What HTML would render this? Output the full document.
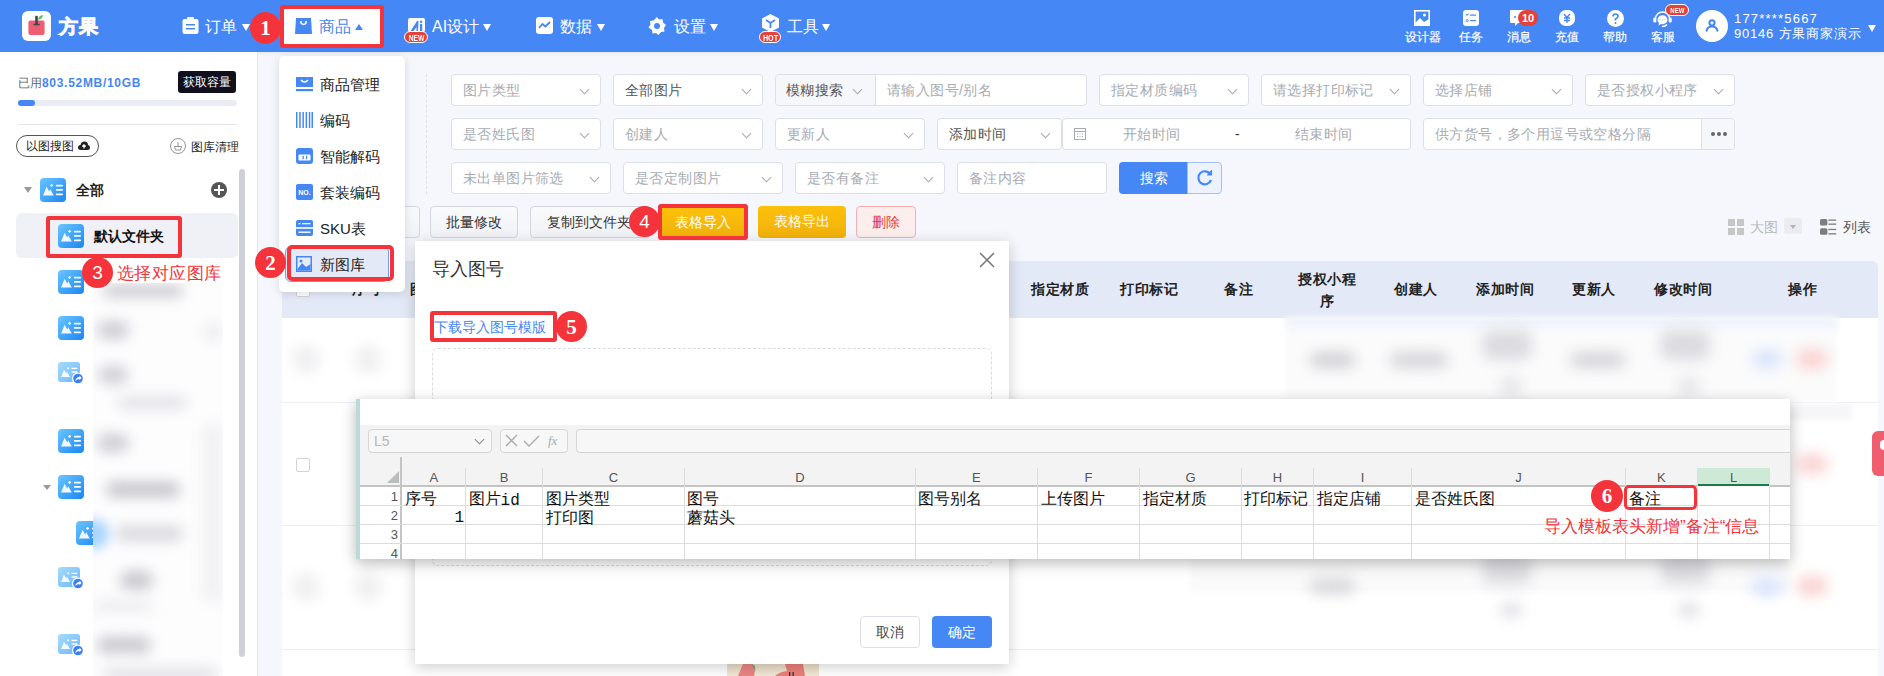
<!DOCTYPE html>
<html><head><meta charset="utf-8">
<style>
*{box-sizing:border-box;margin:0;padding:0}
html,body{width:1884px;height:676px;overflow:hidden;background:#f5f7fc;font-family:"Liberation Sans",sans-serif;color:#333;position:relative}
.a{position:absolute}
.nav{left:0;top:0;width:1884px;height:52px;background:#4587f4;box-shadow:0 1px 4px rgba(0,0,0,.08);z-index:0}
.wt{color:#fff}
.navi{font-size:16px;color:#fff;line-height:16px;white-space:nowrap}
.car{width:0;height:0;border-left:4.5px solid transparent;border-right:4.5px solid transparent;border-top:7px solid #fff}
.rit{font-size:12px;color:#fff;line-height:12px;white-space:nowrap;margin-top:1px;-webkit-text-stroke:0.2px #fff}
.badge{background:#e5413a;color:#fff;font-weight:bold;border-radius:10px;text-align:center}
.side{left:0;top:52px;width:258px;height:624px;background:#fff;border-right:1px solid #e6e8ee}
.sel{background:#fff;border:1px solid #dcdfe6;border-radius:4px;height:32px;font-size:14px;color:#a8abb2;line-height:31px;letter-spacing:0.4px;padding-left:11px;white-space:nowrap}
.chev{position:absolute;right:12px;top:10.5px;width:7px;height:7px;border-right:1px solid #a8abb2;border-bottom:1px solid #a8abb2;transform:rotate(45deg)}
.btn{border:1px solid #d4d6dc;border-radius:4px;background:linear-gradient(#f9fafc,#f1f2f6);height:32px;font-size:14px;line-height:30px;text-align:center;color:#333;white-space:nowrap}
.circ{width:31px;height:31px;border-radius:50%;background:#f5333a;color:#fff;text-align:center;font-size:18px;line-height:31px}
.rbox{border:4px solid #f5333a;border-radius:3px}
.th{font-size:14px;font-weight:bold;color:#222;white-space:nowrap;line-height:16px;letter-spacing:0.6px}
.ico{width:26px;height:24px;border-radius:4px;background:linear-gradient(135deg,#52b4fb,#2d8cf0)}
.ico::before{content:"";position:absolute;left:4px;top:9px;width:0;height:0;border-left:5px solid transparent;border-right:5px solid transparent;border-bottom:10px solid #fff}
.ico::after{content:"";position:absolute;left:16px;top:6px;width:6px;height:2px;background:#fff;box-shadow:0 5px 0 #fff,0 10px 0 #fff}
.sh{opacity:.6}
.blr{filter:blur(6px);border-radius:8px}
.blt{filter:blur(7px);border-radius:10px}
.xh{font-size:13px;line-height:14px;margin-top:1px;color:#555;text-align:center}
.xr{font-size:13px;line-height:14px;color:#555;text-align:right}
.xc{font-family:"Liberation Mono",monospace;font-size:16px;line-height:19px;color:#111;font-weight:300;margin-top:1px;white-space:nowrap}
.cs{font-family:"Liberation Serif",serif;font-size:21px;line-height:32px;font-weight:bold}
.k{display:inline-block;min-width:1em;text-align:center}
.xc .k{font-family:"Liberation Sans",sans-serif;position:relative;top:-1.5px}
</style></head><body>

<svg width="0" height="0" style="position:absolute"><defs>
<linearGradient id="g1" x1="0" y1="0" x2="1" y2="1"><stop offset="0" stop-color="#6ac6ff"/><stop offset="1" stop-color="#1b86f4"/></linearGradient>
<linearGradient id="g2" x1="0" y1="0" x2="1" y2="1"><stop offset="0" stop-color="#a6dcfd"/><stop offset="1" stop-color="#6db7f7"/></linearGradient>
<symbol id="fi" viewBox="0 0 26 24"><rect x="0" y="0" width="26" height="24" rx="4" fill="url(#g1)"/><path d="M3 17.6 L6.6 8.8 L9.2 13.5 L10.2 11.2 L13.8 17.6z" fill="#f2f8ff"/><path d="M11.6 6 V8.8 M10.2 7.4 H13" stroke="#fff" stroke-width="1.2"/><rect x="15.9" y="6.8" width="7.1" height="1.7" rx=".8" fill="#fff"/><rect x="15.9" y="11.1" width="7.1" height="1.7" rx=".8" fill="#fff"/><rect x="15.9" y="15.6" width="7.1" height="1.7" rx=".8" fill="#fff"/></symbol>
<symbol id="fs" viewBox="0 0 26 24"><rect x="0" y="0" width="22" height="20" rx="3" fill="url(#g2)"/><path d="M3 15 L6 7.5 L8.2 11.5 L9 9.5 L12 15z" fill="#f5faff"/><circle cx="10.2" cy="6.3" r="1" fill="#fff"/><rect x="13.5" y="5.7" width="5.8" height="1.4" fill="#fff"/><rect x="13.5" y="9.3" width="5.8" height="1.4" fill="#fff"/><circle cx="20" cy="16.5" r="6" fill="#fff"/><circle cx="20" cy="16.5" r="4.8" fill="#3b7ff0"/><path d="M17.3 19 Q17.8 15.3 21.5 15 V13.6 L23.6 16 L21.5 18.3 V16.9 Q19 16.9 17.3 19z" fill="#fff"/></symbol>
</defs></svg>
<!-- NAV -->
<div class="a nav"></div>
<div class="a" style="left:22px;top:11px;width:29px;height:30px;background:#fff;border-radius:6px"></div>
<svg class="a" style="left:22px;top:11px" width="29" height="30" viewBox="0 0 29 30"><rect x="6.4" y="9.5" width="16.2" height="14.5" rx="2" fill="#ef5e70"/><rect x="13.2" y="4.8" width="2.6" height="9.5" rx="1" fill="#3d434f"/><rect x="11.4" y="12.7" width="6.5" height="1.6" rx=".8" fill="#3d434f"/><path d="M16 8.8 Q16.5 4.5 21 4 Q20.5 8.3 16 8.8z" fill="#5fbf55"/></svg>
<div class="a wt" style="left:59px;top:16px;font-size:19px;font-weight:bold;line-height:22px;-webkit-text-stroke:0.9px #fff;letter-spacing:0.5px"><span class="k">方</span><span class="k">果</span></div>
<svg class="a" style="left:182px;top:17px" width="17" height="17" viewBox="0 0 17 17"><rect x="0.5" y="2" width="16" height="15" rx="2" fill="#fff"/><rect x="5" y="0" width="7" height="4" rx="1" fill="#fff"/><rect x="4" y="7" width="9" height="1.5" fill="#4587f4"/><rect x="4" y="11" width="9" height="1.5" fill="#4587f4"/></svg>
<div class="a navi" style="left:205px;top:19px"><span class="k">订</span><span class="k">单</span></div>
<div class="a car" style="left:242px;top:24px"></div>

<div class="a" style="left:284px;top:9px;width:96px;height:35px;background:#fff"></div>
<svg class="a" style="left:295px;top:18px" width="17" height="16" viewBox="0 0 17 16"><path d="M1 0 H16 L17 16 H0z" fill="#4587f4"/><path d="M6 3 V5 Q8.5 8 11 5 V3" stroke="#fff" stroke-width="1.6" fill="none"/></svg>
<div class="a navi" style="left:319px;top:19px;color:#4587f4"><span class="k">商</span><span class="k">品</span></div>
<div class="a car" style="left:355px;top:24px;border-top:0;border-bottom:6px solid #4587f4"></div>

<svg class="a" style="left:408px;top:18px" width="17" height="14" viewBox="0 0 17 14"><rect x="0" y="0" width="17" height="14" rx="2" fill="#fff"/><path d="M2 14 L9 3 L10.5 3 L10 14 H8.5 L8.6 9 L5 14z" fill="#4587f4"/><rect x="12" y="6" width="2.2" height="8" fill="#4587f4"/><circle cx="13.1" cy="3.8" r="1.2" fill="#4587f4"/></svg>
<div class="a badge" style="left:404px;top:31px;width:24px;height:12px;font-size:9px;line-height:12px;border:1px solid #fff"><span style="display:inline-block;transform:scaleX(.75);font-weight:bold">NEW</span></div>
<div class="a navi" style="left:432px;top:19px">AI<span class="k">设</span><span class="k">计</span></div>
<div class="a car" style="left:483px;top:24px"></div>

<svg class="a" style="left:536px;top:17px" width="17" height="17" viewBox="0 0 17 17"><rect width="17" height="17" rx="3" fill="#fff"/><path d="M3 11 L6.5 7 L9.5 9.5 L14 5" stroke="#4587f4" stroke-width="1.8" fill="none"/></svg>
<div class="a navi" style="left:560px;top:19px"><span class="k">数</span><span class="k">据</span></div>
<div class="a car" style="left:597px;top:24px"></div>

<svg class="a" style="left:648px;top:17px" width="18" height="18" viewBox="0 0 18 18"><path d="M9 0 L11 2.5 L14.5 2 L15 5.5 L18 8 L16 11 L16.5 14.5 L13 15 L10.5 18 L8 16 L4.5 16.5 L4 13 L0.5 10.5 L2.5 7.5 L2 4 L5.5 3.5z" fill="#fff"/><circle cx="9" cy="9" r="3" fill="#4587f4"/></svg>
<div class="a navi" style="left:674px;top:19px"><span class="k">设</span><span class="k">置</span></div>
<div class="a car" style="left:710px;top:24px"></div>

<svg class="a" style="left:762px;top:14px" width="17" height="18" viewBox="0 0 17 18"><path d="M8.5 0 L17 4.5 V13.5 L8.5 18 L0 13.5 V4.5z" fill="#fff"/><path d="M4 6 L8.5 9 L13 6 M8.5 9 V14" stroke="#4587f4" stroke-width="1.8" fill="none"/></svg>
<div class="a badge" style="left:759px;top:31px;width:22px;height:12px;font-size:9px;line-height:12px;border:1px solid #fff"><span style="display:inline-block;transform:scaleX(.8);font-weight:bold">HOT</span></div>
<div class="a navi" style="left:787px;top:19px"><span class="k">工</span><span class="k">具</span></div>
<div class="a car" style="left:822px;top:24px"></div>

<!-- right icons -->
<svg class="a" style="left:1414px;top:10px" width="16" height="16" viewBox="0 0 16 16"><rect x="0.8" y="0.8" width="14.4" height="14.4" fill="none" stroke="#fff" stroke-width="1.6"/><path d="M1 13 L6 8 L10 12 L15 9 V15 H1z" fill="#fff"/><circle cx="10.5" cy="5" r="1.6" fill="#fff"/></svg>
<div class="a rit" style="left:1405px;top:30px"><span class="k">设</span><span class="k">计</span><span class="k">器</span></div>
<svg class="a" style="left:1463px;top:10px" width="16" height="16" viewBox="0 0 16 16"><rect width="16" height="16" rx="3" fill="#fff"/><rect x="7" y="4.5" width="6" height="1.2" fill="#4587f4"/><rect x="7" y="10" width="6" height="1.2" fill="#4587f4"/><path d="M3 4 L4 5.5 L5.5 3.5" stroke="#4587f4" stroke-width="1" fill="none"/><circle cx="4.2" cy="10.6" r="1.1" fill="none" stroke="#4587f4" stroke-width="0.9"/></svg>
<div class="a rit" style="left:1459px;top:30px"><span class="k">任</span><span class="k">务</span></div>
<svg class="a" style="left:1510px;top:10px" width="18" height="17" viewBox="0 0 18 17"><path d="M1 0 H17 A1 1 0 0 1 18 1 V13 H8 L5 16 V13 H1 A1 1 0 0 1 0 12 V1 A1 1 0 0 1 1 0z" fill="#fff"/><circle cx="5" cy="7" r="1" fill="#4587f4"/></svg>
<div class="a badge" style="left:1518px;top:10px;width:20px;height:16px;font-size:11px;line-height:16px;font-weight:bold">10</div>
<div class="a rit" style="left:1507px;top:30px"><span class="k">消</span><span class="k">息</span></div>
<svg class="a" style="left:1559px;top:10px" width="16" height="16" viewBox="0 0 16 16"><rect width="16" height="16" rx="7" fill="#fff"/><path d="M5 4 L8 7.5 L11 4 M8 7.5 V13 M5 8 H11 M5 10.5 H11" stroke="#4587f4" stroke-width="1.3" fill="none"/></svg>
<div class="a rit" style="left:1555px;top:30px"><span class="k">充</span><span class="k">值</span></div>
<svg class="a" style="left:1607px;top:10px" width="17" height="17" viewBox="0 0 17 17"><circle cx="8.5" cy="8.5" r="8.5" fill="#fff"/><path d="M6 6.5 Q6 4 8.5 4 Q11 4 11 6.3 Q11 8 8.5 9 V10.5" stroke="#4587f4" stroke-width="1.7" fill="none"/><circle cx="8.5" cy="13" r="1" fill="#4587f4"/></svg>
<div class="a rit" style="left:1603px;top:30px"><span class="k">帮</span><span class="k">助</span></div>
<svg class="a" style="left:1653px;top:9px" width="19" height="18" viewBox="0 0 19 18"><path d="M2.5 10 A7 7 0 0 1 16.5 10" stroke="#fff" stroke-width="1.6" fill="none"/><rect x="0.3" y="8.5" width="3" height="5" rx="1.2" fill="#fff"/><rect x="15.7" y="8.5" width="3" height="5" rx="1.2" fill="#fff"/><path d="M4.5 10.5 A5 4.5 0 1 1 8 15 L5.5 16.5 L6 14 A5 4.5 0 0 1 4.5 10.5z" fill="#fff"/><circle cx="7" cy="10.5" r=".7" fill="#b9cff8"/><circle cx="9.5" cy="10.5" r=".7" fill="#b9cff8"/><circle cx="12" cy="10.5" r=".7" fill="#b9cff8"/><path d="M14 15.5 Q12 17.8 9 17.5" stroke="#fff" stroke-width="1.5" fill="none"/></svg>
<div class="a badge" style="left:1665px;top:4px;width:24px;height:12px;font-size:8px;line-height:12px;border:1px solid #fff"><span style="display:inline-block;transform:scaleX(.75);font-weight:bold">NEW</span></div>
<div class="a rit" style="left:1651px;top:30px"><span class="k">客</span><span class="k">服</span></div>
<div class="a" style="left:1696px;top:10px;width:32px;height:32px;border-radius:50%;background:#fff"></div>
<svg class="a" style="left:1703px;top:17px" width="18" height="18" viewBox="0 0 18 18"><circle cx="9" cy="5.8" r="2.6" stroke="#4587f4" stroke-width="2" fill="none"/><path d="M3.6 13.8 Q4.5 9.6 9 9.6 Q13.5 9.6 14.4 13.8" stroke="#4587f4" stroke-width="2" fill="none" stroke-linecap="round"/></svg>
<div class="a wt" style="left:1734px;top:12px;font-size:13px;line-height:13px;letter-spacing:1.2px">177****5667</div>
<div class="a wt" style="left:1734px;top:27px;font-size:13px;line-height:13px;letter-spacing:0.8px">90146 <span class="k">方</span><span class="k">果</span><span class="k">商</span><span class="k">家</span><span class="k">演</span><span class="k">示</span></div>
<div class="a car" style="left:1868px;top:25px"></div>

<!-- SIDEBAR -->
<div class="a side"></div>


<!-- SIDEBAR content -->
<div class="a" style="left:18px;top:76px;font-size:12px;line-height:14px;color:#666;white-space:nowrap"><span class="k">已</span><span class="k">用</span><b style="color:#4587f4;letter-spacing:0.7px">803.52MB/10GB</b></div>
<div class="a" style="left:178px;top:71px;width:58px;height:22px;background:#0f0f1e;border-radius:3px;color:#fff;font-size:12px;line-height:22px;text-align:center"><span class="k">获</span><span class="k">取</span><span class="k">容</span><span class="k">量</span></div>
<div class="a" style="left:18px;top:100px;width:219px;height:6px;background:#e9ecf3;border-radius:3px"></div>
<div class="a" style="left:18px;top:100px;width:17px;height:6px;background:#4587f4;border-radius:3px"></div>
<div class="a" style="left:18px;top:124px;width:219px;height:1px;background:#e3e5ea"></div>
<div class="a" style="left:16px;top:135px;width:83px;height:22px;border:1px solid #555;border-radius:11px;font-size:12px;line-height:20px;padding-left:9px;color:#222;white-space:nowrap"><span class="k">以</span><span class="k">图</span><span class="k">搜</span><span class="k">图</span></div>
<svg class="a" style="left:78px;top:141px" width="12" height="10" viewBox="0 0 12 10"><path d="M3 9 Q0 9 0 6.5 Q0 4 2.5 4 Q3 0.5 6.5 0.5 Q10 0.5 10 4 Q12 4.3 12 6.5 Q12 9 9.5 9z" fill="#222"/><path d="M6 7.5 V4 M4.3 5.5 L6 3.8 L7.7 5.5" stroke="#fff" stroke-width="1.2" fill="none"/></svg>
<svg class="a" style="left:170px;top:138px" width="16" height="16" viewBox="0 0 16 16"><circle cx="8" cy="8" r="7.5" fill="none" stroke="#888" stroke-width="0.9"/><path d="M4.5 8.5 H11.5 L10.5 12 H5.5z M8 4 V8.5" stroke="#888" stroke-width="0.9" fill="none"/></svg>
<div class="a" style="left:191px;top:140px;font-size:12px;line-height:14px;color:#222;white-space:nowrap"><span class="k">图</span><span class="k">库</span><span class="k">清</span><span class="k">理</span></div>

<div class="a" style="left:239px;top:169px;width:6px;height:488px;background:#cfd1d6;border-radius:3px"></div>

<!-- tree -->
<div class="a" style="left:24px;top:187px;width:0;height:0;border-left:4px solid transparent;border-right:4px solid transparent;border-top:6px solid #999"></div>
<svg class="a" style="left:40px;top:178px" width="26" height="24"><use href="#fi"/></svg>
<div class="a" style="left:76px;top:182px;font-size:14px;font-weight:bold;line-height:16px;color:#222"><span class="k">全</span><span class="k">部</span></div>
<div class="a" style="left:211px;top:182px;width:16px;height:16px;border-radius:50%;background:#555"></div>
<div class="a" style="left:218px;top:185px;width:2px;height:10px;background:#fff"></div>
<div class="a" style="left:214px;top:189px;width:10px;height:2px;background:#fff"></div>

<div class="a" style="left:16px;top:213px;width:222px;height:45px;background:#f0f1f7;border-radius:6px"></div>
<svg class="a" style="left:58px;top:224px" width="26" height="24"><use href="#fi"/></svg>
<div class="a" style="left:94px;top:228px;font-size:14px;font-weight:bold;line-height:16px;color:#111;white-space:nowrap"><span class="k">默</span><span class="k">认</span><span class="k">文</span><span class="k">件</span><span class="k">夹</span></div>

<svg class="a" style="left:58px;top:270px" width="26" height="24"><use href="#fi"/></svg>
<svg class="a" style="left:58px;top:316px" width="26" height="24"><use href="#fi"/></svg>
<svg class="a" style="left:58px;top:362px" width="26" height="24"><use href="#fs"/></svg>
<svg class="a" style="left:58px;top:429px" width="26" height="24"><use href="#fi"/></svg>
<div class="a" style="left:43px;top:485px;width:0;height:0;border-left:4px solid transparent;border-right:4px solid transparent;border-top:5px solid #999"></div>
<svg class="a" style="left:58px;top:475px" width="26" height="24"><use href="#fi"/></svg>
<svg class="a" style="left:76px;top:521px" width="26" height="24"><use href="#fi"/></svg>
<svg class="a" style="left:58px;top:567px" width="26" height="24"><use href="#fs"/></svg>
<svg class="a" style="left:58px;top:634px" width="26" height="24"><use href="#fs"/></svg>

<!-- blurred tree labels -->
<div class="a" style="left:93px;top:283px;width:130px;height:393px;background:#fdfdfe;overflow:hidden">
  <div class="a blt" style="left:10px;top:2px;width:80px;height:12px;background:#c9c9ce"></div>
  <div class="a blt" style="left:4px;top:38px;width:32px;height:18px;background:#cdcdd2"></div>
  <div class="a blt" style="left:110px;top:40px;width:20px;height:18px;background:#ececef"></div>
  <div class="a blt" style="left:5px;top:83px;width:30px;height:18px;background:#cfcfd4"></div>
  <div class="a blt" style="left:24px;top:113px;width:70px;height:13px;background:#e2e2e6"></div>
  <div class="a blt" style="left:4px;top:151px;width:32px;height:18px;background:#cdcdd2"></div>
  <div class="a blt" style="left:13px;top:199px;width:74px;height:15px;background:#c4c4c9"></div>
  <div class="a blt" style="left:22px;top:243px;width:68px;height:15px;background:#d8d8dc"></div>
  <div class="a blt" style="left:27px;top:288px;width:33px;height:19px;background:#c8c8cd"></div>
  <div class="a blt" style="left:0px;top:317px;width:60px;height:12px;background:#ececef"></div>
  <div class="a blt" style="left:4px;top:354px;width:54px;height:16px;background:#c8c8cd"></div>
  <div class="a blt" style="left:10px;top:385px;width:115px;height:12px;background:#e0e0e4"></div>
  <div class="a blt" style="left:110px;top:140px;width:20px;height:180px;background:#f0f0f2"></div>
  <div class="a" style="left:-14px;top:236px;width:30px;height:30px;background:#a9d3fd;filter:blur(6px);border-radius:50%"></div>
</div>
<!-- FILTERS -->
<div class="a" style="left:426px;top:74px;width:0;height:120px;border-left:1px dashed #dcdfe6"></div>
<div class="a sel" style="left:451px;top:74px;width:150px"><span class="k">图</span><span class="k">片</span><span class="k">类</span><span class="k">型</span><i class="chev"></i></div>
<div class="a sel" style="left:613px;top:74px;width:150px;color:#555"><span class="k">全</span><span class="k">部</span><span class="k">图</span><span class="k">片</span><i class="chev"></i></div>
<div class="a sel" style="left:775px;top:74px;width:312px;color:#555;padding:0"><div class="a" style="left:0;top:0;width:100px;height:30px;background:#f5f7fa;border-right:1px solid #dcdfe6;padding-left:10px;border-radius:4px 0 0 4px"><span class="k">模</span><span class="k">糊</span><span class="k">搜</span><span class="k">索</span><i class="chev" style="right:14px"></i></div><span class="a" style="left:111px;top:0;color:#a8abb2"><span class="k">请</span><span class="k">输</span><span class="k">入</span><span class="k">图</span><span class="k">号</span>/<span class="k">别</span><span class="k">名</span></span></div>
<div class="a sel" style="left:1099px;top:74px;width:150px"><span class="k">指</span><span class="k">定</span><span class="k">材</span><span class="k">质</span><span class="k">编</span><span class="k">码</span><i class="chev"></i></div>
<div class="a sel" style="left:1261px;top:74px;width:150px"><span class="k">请</span><span class="k">选</span><span class="k">择</span><span class="k">打</span><span class="k">印</span><span class="k">标</span><span class="k">记</span><i class="chev"></i></div>
<div class="a sel" style="left:1423px;top:74px;width:150px"><span class="k">选</span><span class="k">择</span><span class="k">店</span><span class="k">铺</span><i class="chev"></i></div>
<div class="a sel" style="left:1585px;top:74px;width:150px"><span class="k">是</span><span class="k">否</span><span class="k">授</span><span class="k">权</span><span class="k">小</span><span class="k">程</span><span class="k">序</span><i class="chev"></i></div>

<div class="a sel" style="left:451px;top:118px;width:150px"><span class="k">是</span><span class="k">否</span><span class="k">姓</span><span class="k">氏</span><span class="k">图</span><i class="chev"></i></div>
<div class="a sel" style="left:613px;top:118px;width:150px"><span class="k">创</span><span class="k">建</span><span class="k">人</span><i class="chev"></i></div>
<div class="a sel" style="left:775px;top:118px;width:150px"><span class="k">更</span><span class="k">新</span><span class="k">人</span><i class="chev"></i></div>
<div class="a sel" style="left:937px;top:118px;width:125px;color:#555"><span class="k">添</span><span class="k">加</span><span class="k">时</span><span class="k">间</span><i class="chev"></i></div>
<div class="a sel" style="left:1062px;top:118px;width:349px;padding:0"><svg class="a" style="left:11px;top:8px" width="12" height="13" viewBox="0 0 12 13"><rect x="0.5" y="1.5" width="11" height="11" fill="none" stroke="#a8abb2"/><path d="M0.5 4.5 H11.5" stroke="#a8abb2"/><path d="M3 7 H4 M5.5 7 H6.5 M8 7 H9 M3 9.5 H4 M5.5 9.5 H6.5 M8 9.5 H9" stroke="#a8abb2"/></svg><span class="a" style="left:60px;top:0"><span class="k">开</span><span class="k">始</span><span class="k">时</span><span class="k">间</span></span><span class="a" style="left:172px;top:0;color:#333">-</span><span class="a" style="left:232px;top:0"><span class="k">结</span><span class="k">束</span><span class="k">时</span><span class="k">间</span></span></div>
<div class="a sel" style="left:1423px;top:118px;width:312px;padding:0"><span class="a" style="left:11px;top:0"><span class="k">供</span><span class="k">方</span><span class="k">货</span><span class="k">号</span><span class="k">，</span><span class="k">多</span><span class="k">个</span><span class="k">用</span><span class="k">逗</span><span class="k">号</span><span class="k">或</span><span class="k">空</span><span class="k">格</span><span class="k">分</span><span class="k">隔</span></span><div class="a" style="left:277px;top:0;width:33px;height:30px;background:#f5f7fa;border-left:1px solid #dcdfe6;border-radius:0 4px 4px 0"><i class="a" style="left:9px;top:13px;width:4px;height:4px;border-radius:2px;background:#666;box-shadow:6px 0 0 #666,12px 0 0 #666"></i></div></div>

<div class="a sel" style="left:451px;top:162px;width:160px"><span class="k">未</span><span class="k">出</span><span class="k">单</span><span class="k">图</span><span class="k">片</span><span class="k">筛</span><span class="k">选</span><i class="chev"></i></div>
<div class="a sel" style="left:623px;top:162px;width:160px"><span class="k">是</span><span class="k">否</span><span class="k">定</span><span class="k">制</span><span class="k">图</span><span class="k">片</span><i class="chev"></i></div>
<div class="a sel" style="left:795px;top:162px;width:150px"><span class="k">是</span><span class="k">否</span><span class="k">有</span><span class="k">备</span><span class="k">注</span><i class="chev"></i></div>
<div class="a sel" style="left:957px;top:162px;width:150px"><span class="k">备</span><span class="k">注</span><span class="k">内</span><span class="k">容</span></div>
<div class="a" style="left:1119px;top:162px;width:69px;height:32px;background:#4587f4;border-radius:4px 0 0 4px;color:#fff;font-size:14px;line-height:32px;text-align:center"><span class="k">搜</span><span class="k">索</span></div>
<div class="a" style="left:1187px;top:162px;width:35px;height:32px;background:#ecf3fe;border:1px solid #9ec0f8;border-radius:0 4px 4px 0"></div>
<svg class="a" style="left:1196px;top:169px" width="18" height="18" viewBox="0 0 18 18"><path d="M14.5 5.5 A6.5 6.5 0 1 0 15 11" stroke="#4587f4" stroke-width="2.2" fill="none"/><path d="M11 5 H16 V0.5" fill="#4587f4"/><path d="M16 1 V6.5 H10.5z" fill="#4587f4"/></svg>

<!-- TOOLBAR -->
<div class="a btn" style="left:380px;top:206px;width:40px"></div>
<div class="a btn" style="left:430px;top:206px;width:88px"><span class="k">批</span><span class="k">量</span><span class="k">修</span><span class="k">改</span></div>
<div class="a btn" style="left:530px;top:206px;width:120px;text-align:left;padding-left:16px"><span class="k">复</span><span class="k">制</span><span class="k">到</span><span class="k">文</span><span class="k">件</span><span class="k">夹</span></div>
<div class="a" style="left:661px;top:207px;width:83px;height:30px;background:linear-gradient(#fcc00a,#f1b10a);color:#fff;font-size:14px;line-height:30px;text-align:center"><span class="k">表</span><span class="k">格</span><span class="k">导</span><span class="k">入</span></div>
<div class="a" style="left:758px;top:206px;width:88px;height:32px;background:linear-gradient(#fcc00a,#f1b10a);border-radius:4px;color:#fff;font-size:14px;line-height:31px;text-align:center"><span class="k">表</span><span class="k">格</span><span class="k">导</span><span class="k">出</span></div>
<div class="a" style="left:856px;top:206px;width:60px;height:32px;background:#fdeeee;border:1px solid #f5b0b0;border-radius:4px;color:#e03a3a;font-size:14px;line-height:30px;text-align:center"><span class="k">删</span><span class="k">除</span></div>

<!-- view switch -->
<div class="a" style="left:1728px;top:219px;width:7px;height:7px;background:#c6c6c6;box-shadow:9px 0 0 #c6c6c6,0 9px 0 #c6c6c6,9px 9px 0 #c6c6c6"></div>
<div class="a" style="left:1750px;top:219px;font-size:14px;line-height:16px;color:#b8b8b8"><span class="k">大</span><span class="k">图</span></div>
<div class="a" style="left:1784px;top:218px;width:18px;height:16px;background:#ebecef;border-radius:2px"></div>
<div class="a" style="left:1790px;top:225px;width:0;height:0;border-left:3px solid transparent;border-right:3px solid transparent;border-top:4px solid #b0b3ba"></div>
<svg class="a" style="left:1820px;top:219px" width="17" height="16" viewBox="0 0 17 16"><rect x="0" y="0" width="7.4" height="6.4" rx="1.5" fill="#7d7d7d"/><rect x="0" y="9.3" width="7.4" height="6.4" rx="1.5" fill="#7d7d7d"/><rect x="8.4" y="0.5" width="7.8" height="1.3" fill="#7d7d7d"/><rect x="8.4" y="4.5" width="7.8" height="1.3" fill="#7d7d7d"/><rect x="8.4" y="9.8" width="7.8" height="1.3" fill="#7d7d7d"/><rect x="8.4" y="14.2" width="7.8" height="1.3" fill="#7d7d7d"/></svg>
<div class="a" style="left:1843px;top:219px;font-size:14px;line-height:16px;color:#555"><span class="k">列</span><span class="k">表</span></div>


<!-- TABLE -->
<div class="a" style="left:282px;top:261px;width:1596px;height:415px;background:#fff;border-radius:6px 6px 0 0"></div>
<div class="a" style="left:282px;top:261px;width:1596px;height:57px;background:#e4e9f7;border-radius:6px 6px 0 0"></div>
<div class="a" style="left:296px;top:283px;width:14px;height:14px;border:1px solid #d0d3da;background:#fff;border-radius:2px"></div>
<div class="a th" style="left:352px;top:281px"><span class="k">序</span><span class="k">号</span></div>
<div class="a th" style="left:410px;top:281px"><span class="k">图</span><span class="k">片</span></div>
<div class="a th" style="left:1031px;top:281px"><span class="k">指</span><span class="k">定</span><span class="k">材</span><span class="k">质</span></div>
<div class="a th" style="left:1120px;top:281px"><span class="k">打</span><span class="k">印</span><span class="k">标</span><span class="k">记</span></div>
<div class="a th" style="left:1224px;top:281px"><span class="k">备</span><span class="k">注</span></div>
<div class="a th" style="left:1298px;top:271px"><span class="k">授</span><span class="k">权</span><span class="k">小</span><span class="k">程</span></div>
<div class="a th" style="left:1320px;top:293px"><span class="k">序</span></div>
<div class="a th" style="left:1394px;top:281px"><span class="k">创</span><span class="k">建</span><span class="k">人</span></div>
<div class="a th" style="left:1476px;top:281px"><span class="k">添</span><span class="k">加</span><span class="k">时</span><span class="k">间</span></div>
<div class="a th" style="left:1572px;top:281px"><span class="k">更</span><span class="k">新</span><span class="k">人</span></div>
<div class="a th" style="left:1654px;top:281px"><span class="k">修</span><span class="k">改</span><span class="k">时</span><span class="k">间</span></div>
<div class="a th" style="left:1788px;top:281px"><span class="k">操</span><span class="k">作</span></div>
<div class="a" style="left:282px;top:402px;width:1596px;height:1px;background:#ebeef5"></div>
<div class="a" style="left:282px;top:525px;width:1596px;height:1px;background:#ebeef5"></div>
<div class="a" style="left:282px;top:649px;width:1596px;height:1px;background:#ebeef5"></div>
<div class="a" style="left:296px;top:458px;width:14px;height:14px;border:1px solid #d0d3da;background:#fff;border-radius:2px"></div>

<!-- blurred row content -->
<div class="a blt" style="left:292px;top:345px;width:28px;height:28px;background:#efeff1;border-radius:50%"></div>
<div class="a blt" style="left:354px;top:345px;width:28px;height:28px;background:#efeff1;border-radius:50%"></div>
<div class="a blt" style="left:292px;top:573px;width:28px;height:28px;background:#efeff1;border-radius:50%"></div>
<div class="a blt" style="left:354px;top:573px;width:28px;height:28px;background:#efeff1;border-radius:50%"></div>
<div class="a" style="left:1286px;top:317px;width:551px;height:86px;background:#fbfbfc;filter:blur(2px)"></div>
<div class="a" style="left:1286px;top:317px;width:551px;height:10px;background:#eef1fa;filter:blur(4px)"></div>
<div class="a blt" style="left:1310px;top:352px;width:45px;height:16px;background:#d2d2d6"></div>
<div class="a blt" style="left:1390px;top:352px;width:58px;height:16px;background:#d6d6da"></div>
<div class="a blt" style="left:1482px;top:330px;width:50px;height:30px;background:#dcdce0"></div>
<div class="a blt" style="left:1500px;top:378px;width:22px;height:16px;background:#e2e2e6"></div>
<div class="a blt" style="left:1570px;top:352px;width:55px;height:16px;background:#d6d6da"></div>
<div class="a blt" style="left:1660px;top:330px;width:50px;height:30px;background:#dcdce0"></div>
<div class="a blt" style="left:1678px;top:378px;width:22px;height:16px;background:#e2e2e6"></div>
<div class="a blt" style="left:1752px;top:350px;width:30px;height:18px;background:#d8e3fb"></div>
<div class="a blt" style="left:1796px;top:349px;width:32px;height:20px;background:#fad3d3"></div>
<div class="a blt" style="left:1796px;top:454px;width:32px;height:20px;background:#fad3d3"></div>
<div class="a" style="left:1790px;top:404px;width:62px;height:16px;background:#f6f6f8;filter:blur(2px)"></div>
<div class="a" style="left:1190px;top:559px;width:600px;height:34px;background:#fafafb;filter:blur(3px)"></div>
<div class="a blt" style="left:1310px;top:578px;width:45px;height:16px;background:#d8d8dc"></div>
<div class="a blt" style="left:1482px;top:556px;width:50px;height:28px;background:#dcdce0"></div>
<div class="a blt" style="left:1500px;top:602px;width:22px;height:16px;background:#e2e2e6"></div>
<div class="a blt" style="left:1660px;top:556px;width:50px;height:28px;background:#dcdce0"></div>
<div class="a blt" style="left:1678px;top:602px;width:22px;height:16px;background:#e2e2e6"></div>
<div class="a blt" style="left:1752px;top:578px;width:30px;height:18px;background:#d8e3fb"></div>
<div class="a blt" style="left:1796px;top:576px;width:32px;height:20px;background:#fad3d3"></div>
<div class="a" style="left:1872px;top:431px;width:14px;height:45px;background:#ef5d6e;border-radius:6px 0 0 6px"></div>
<div class="a" style="left:1880px;top:440px;width:8px;height:10px;background:#fff;border-radius:4px"></div>
<!-- strawberry image under modal -->
<svg class="a" style="left:727px;top:664px" width="92" height="12" viewBox="0 0 92 12"><defs><linearGradient id="bg3" x1="0" y1="0" x2="0" y2="1"><stop offset="0" stop-color="#e8dcc6"/><stop offset="1" stop-color="#f3e9d8"/></linearGradient></defs><rect width="92" height="12" fill="url(#bg3)"/><path d="M11 12 L16 0 H26 L28 7 L27 12z" fill="#ec8583"/><path d="M25 0 L28 2 L28.5 7 L27 5z" fill="#6aa77a"/><path d="M48 12 Q52 8 60 7 L58 0 H76 L77 6 L78 12z" fill="#ec7f7b"/><rect x="62" y="8" width="1.3" height="4" fill="#333"/><rect x="65.5" y="8" width="1.3" height="4" fill="#333"/></svg>
<!-- DROPDOWN MENU -->
<div class="a" style="left:279px;top:56px;width:126px;height:236px;background:#fff;border-radius:5px;box-shadow:0 2px 10px rgba(0,0,0,.13)"></div>
<svg class="a" style="left:296px;top:77px" width="17" height="15" viewBox="0 0 17 15"><path d="M0 0 H17 V10 H0z" fill="#4587f4"/><path d="M5 3 Q8.5 7 12 3" stroke="#fff" stroke-width="1.6" fill="none"/><rect x="0" y="12" width="17" height="2.2" fill="#4587f4"/></svg>
<div class="a" style="left:320px;top:77px;font-size:15px;line-height:16px;color:#222"><span class="k">商</span><span class="k">品</span><span class="k">管</span><span class="k">理</span></div>
<svg class="a" style="left:296px;top:112px" width="17" height="16" viewBox="0 0 17 16"><rect x="0" y="0" width="1.5" height="16" fill="#4587f4"/><rect x="3.2" y="0" width="1.5" height="16" fill="#4587f4"/><rect x="6.4" y="0" width="1.5" height="16" fill="#4587f4"/><rect x="9.6" y="0" width="1.5" height="16" fill="#4587f4"/><rect x="12.8" y="0" width="1.5" height="16" fill="#4587f4"/><rect x="15.5" y="0" width="1.5" height="16" fill="#4587f4"/></svg>
<div class="a" style="left:320px;top:113px;font-size:15px;line-height:16px;color:#222"><span class="k">编</span><span class="k">码</span></div>
<svg class="a" style="left:296px;top:148px" width="17" height="16" viewBox="0 0 17 16"><rect x="0" y="0" width="17" height="16" rx="3" fill="#4587f4"/><rect x="2.5" y="6.5" width="12" height="6" rx="1" fill="#fff"/><rect x="6.5" y="7.8" width="1.3" height="3.4" fill="#4587f4"/><rect x="10" y="7.8" width="1.3" height="3.4" fill="#4587f4"/></svg>
<div class="a" style="left:320px;top:149px;font-size:15px;line-height:16px;color:#222"><span class="k">智</span><span class="k">能</span><span class="k">解</span><span class="k">码</span></div>
<svg class="a" style="left:296px;top:184px" width="17" height="16" viewBox="0 0 17 16"><rect x="0" y="0" width="17" height="16" rx="2" fill="#4587f4"/><text x="8.5" y="11" font-size="7" font-weight="bold" fill="#fff" text-anchor="middle" font-family="Liberation Sans">NO.</text></svg>
<div class="a" style="left:320px;top:185px;font-size:15px;line-height:16px;color:#222"><span class="k">套</span><span class="k">装</span><span class="k">编</span><span class="k">码</span></div>
<svg class="a" style="left:296px;top:220px" width="17" height="16" viewBox="0 0 17 16"><rect x="0" y="0" width="17" height="16" rx="2" fill="#4587f4"/><rect x="0" y="7.2" width="17" height="1.6" fill="#fff"/><rect x="2.5" y="3" width="2" height="1.3" fill="#fff"/><rect x="6" y="3" width="8.5" height="1.3" fill="#fff"/><rect x="2.5" y="11.5" width="12" height="1.4" fill="#fff"/></svg>
<div class="a" style="left:320px;top:221px;font-size:15px;line-height:16px;color:#222">SKU<span class="k">表</span></div>
<div class="a" style="left:285px;top:246px;width:104px;height:36px;background:#e4e9f8;border:1px solid #6e9ef5;border-radius:6px"></div>
<svg class="a" style="left:296px;top:256px" width="16" height="16" viewBox="0 0 16 16"><rect x="0" y="0" width="16" height="16" fill="#4587f4"/><rect x="1.5" y="1.5" width="13" height="13" fill="#e7ecfa"/><path d="M1.5 13 L6 7 L10 11 L14.5 8 V14.5 H1.5z" fill="#4587f4"/><circle cx="5" cy="5" r="1.5" fill="#4587f4"/></svg>
<div class="a" style="left:320px;top:257px;font-size:15px;line-height:16px;color:#222"><span class="k">新</span><span class="k">图</span><span class="k">库</span></div>

<!-- MODAL -->
<div class="a" style="left:415px;top:241px;width:594px;height:423px;background:#fff;box-shadow:0 3px 14px rgba(0,0,0,.2)"></div>
<div class="a" style="left:432px;top:260px;font-size:18px;line-height:18px;color:#333"><span class="k">导</span><span class="k">入</span><span class="k">图</span><span class="k">号</span></div>
<svg class="a" style="left:979px;top:252px" width="16" height="16" viewBox="0 0 16 16"><path d="M1 1 L15 15 M15 1 L1 15" stroke="#777" stroke-width="1.5"/></svg>
<div class="a" style="left:434px;top:319px;font-size:14px;line-height:16px;color:#4587f4"><span class="k">下</span><span class="k">载</span><span class="k">导</span><span class="k">入</span><span class="k">图</span><span class="k">号</span><span class="k">模</span><span class="k">版</span></div>
<div class="a" style="left:432px;top:348px;width:560px;height:218px;border:1px dashed #d9dbe0;border-radius:6px"></div>
<div class="a" style="left:860px;top:616px;width:60px;height:32px;border:1px solid #dcdfe6;border-radius:4px;font-size:14px;line-height:30px;text-align:center;color:#444"><span class="k">取</span><span class="k">消</span></div>
<div class="a" style="left:932px;top:616px;width:60px;height:32px;background:#4587f4;border-radius:4px;font-size:14px;line-height:32px;text-align:center;color:#fff"><span class="k">确</span><span class="k">定</span></div>

<!-- EXCEL -->
<div class="a" style="left:356px;top:399px;width:1434px;height:160px;background:#fff;box-shadow:0 4px 14px rgba(0,0,0,.28)"></div>
<div class="a" style="left:356px;top:399px;width:3.5px;height:160px;background:#b9d9db"></div>
<div class="a" style="left:360px;top:425px;width:1430px;height:61px;background:#f3f3f3"></div>
<div class="a" style="left:368px;top:429px;width:124px;height:24px;border:1px solid #d6d6d6;border-radius:4px;background:#f7f7f7;font-size:14px;line-height:22px;color:#b8b8b8;padding-left:5px;font-family:'Liberation Sans',sans-serif">L5<i class="chev" style="right:8px;top:6px;border-color:#888"></i></div>
<div class="a" style="left:500px;top:429px;width:68px;height:24px;border:1px solid #d6d6d6;border-radius:4px;background:#f7f7f7"></div>
<svg class="a" style="left:504px;top:433px" width="62" height="16" viewBox="0 0 62 16"><path d="M2 2 L13 13 M13 2 L2 13" stroke="#aaa" stroke-width="1.3"/><path d="M20 8 L25 13 L35 3" stroke="#aaa" stroke-width="1.3" fill="none"/><text x="44" y="12" font-size="13" font-style="italic" fill="#aaa" font-family="Liberation Serif">fx</text></svg>
<div class="a" style="left:576px;top:429px;width:1214px;height:24px;border:1px solid #d6d6d6;border-right:0;border-radius:4px 0 0 4px;background:#f7f7f7"></div>
<div class="a" style="left:360px;top:486px;width:1430px;height:73px;background:#fff"></div>
<div class="a" style="left:1697px;top:468px;width:73px;height:18px;background:#cfe9d9"></div>
<div class="a" style="left:1697px;top:484px;width:73px;height:2px;background:#1e7a44"></div>
<div class="a" style="left:360px;top:485px;width:1337px;height:2px;background:#c4c4c4"></div>
<div class="a" style="left:1770px;top:485px;width:20px;height:2px;background:#c4c4c4"></div>
<div class="a" style="left:400px;top:457px;width:2px;height:102px;background:#c4c4c4"></div>
<div class="a" style="left:387px;top:471px;width:0;height:0;border-left:12px solid transparent;border-bottom:12px solid #bdbdbd"></div>
<div class="a xh" style="top:1px;left:402.0px;top:470px;width:63.6px">A</div>
<div class="a xh" style="top:1px;left:465.6px;top:470px;width:77.0px">B</div>
<div class="a xh" style="top:1px;left:542.6px;top:470px;width:141.8px">C</div>
<div class="a xh" style="top:1px;left:684.4px;top:470px;width:230.9px">D</div>
<div class="a xh" style="top:1px;left:915.3px;top:470px;width:122.2px">E</div>
<div class="a xh" style="top:1px;left:1037.5px;top:470px;width:102.2px">F</div>
<div class="a xh" style="top:1px;left:1139.8px;top:470px;width:101.5px">G</div>
<div class="a xh" style="top:1px;left:1241.3px;top:470px;width:72.2px">H</div>
<div class="a xh" style="top:1px;left:1313.5px;top:470px;width:98.1px">I</div>
<div class="a xh" style="top:1px;left:1411.6px;top:470px;width:213.9px">J</div>
<div class="a xh" style="top:1px;left:1625.5px;top:470px;width:71.8px">K</div>
<div class="a xh" style="top:1px;left:1697.3px;top:470px;width:72.5px">L</div>
<div class="a" style="left:465.1px;top:468px;width:1px;height:91px;background:#dcdcdc"></div>
<div class="a" style="left:542.1px;top:468px;width:1px;height:91px;background:#dcdcdc"></div>
<div class="a" style="left:683.9px;top:468px;width:1px;height:91px;background:#dcdcdc"></div>
<div class="a" style="left:914.8px;top:468px;width:1px;height:91px;background:#dcdcdc"></div>
<div class="a" style="left:1037.0px;top:468px;width:1px;height:91px;background:#dcdcdc"></div>
<div class="a" style="left:1139.2px;top:468px;width:1px;height:91px;background:#dcdcdc"></div>
<div class="a" style="left:1240.8px;top:468px;width:1px;height:91px;background:#dcdcdc"></div>
<div class="a" style="left:1313.0px;top:468px;width:1px;height:91px;background:#dcdcdc"></div>
<div class="a" style="left:1411.1px;top:468px;width:1px;height:91px;background:#dcdcdc"></div>
<div class="a" style="left:1625.0px;top:468px;width:1px;height:91px;background:#dcdcdc"></div>
<div class="a" style="left:1696.8px;top:468px;width:1px;height:91px;background:#dcdcdc"></div>
<div class="a" style="left:1769.3px;top:468px;width:1px;height:91px;background:#dcdcdc"></div>
<div class="a" style="left:360px;top:505px;width:1430px;height:1px;background:#dcdcdc"></div>
<div class="a" style="left:360px;top:524px;width:1430px;height:1px;background:#dcdcdc"></div>
<div class="a" style="left:360px;top:543px;width:1430px;height:1px;background:#dcdcdc"></div>
<div class="a xr" style="left:360px;top:490px;width:38px">1</div>
<div class="a xr" style="left:360px;top:509px;width:38px">2</div>
<div class="a xr" style="left:360px;top:528px;width:38px">3</div>
<div class="a xr" style="left:360px;top:547px;width:38px">4</div>
<div class="a xc" style="left:405.0px;top:489px"><span class="k">序</span><span class="k">号</span></div>
<div class="a xc" style="left:468.6px;top:489px"><span class="k">图</span><span class="k">片</span>id</div>
<div class="a xc" style="left:545.6px;top:489px"><span class="k">图</span><span class="k">片</span><span class="k">类</span><span class="k">型</span></div>
<div class="a xc" style="left:687.4px;top:489px"><span class="k">图</span><span class="k">号</span></div>
<div class="a xc" style="left:918.3px;top:489px"><span class="k">图</span><span class="k">号</span><span class="k">别</span><span class="k">名</span></div>
<div class="a xc" style="left:1040.5px;top:489px"><span class="k">上</span><span class="k">传</span><span class="k">图</span><span class="k">片</span></div>
<div class="a xc" style="left:1142.8px;top:489px"><span class="k">指</span><span class="k">定</span><span class="k">材</span><span class="k">质</span></div>
<div class="a xc" style="left:1244.3px;top:489px"><span class="k">打</span><span class="k">印</span><span class="k">标</span><span class="k">记</span></div>
<div class="a xc" style="left:1316.5px;top:489px"><span class="k">指</span><span class="k">定</span><span class="k">店</span><span class="k">铺</span></div>
<div class="a xc" style="left:1414.6px;top:489px"><span class="k">是</span><span class="k">否</span><span class="k">姓</span><span class="k">氏</span><span class="k">图</span></div>
<div class="a xc" style="left:1628.5px;top:489px"><span class="k">备</span><span class="k">注</span></div>
<div class="a xc" style="left:452px;top:508px;width:12px;text-align:right">1</div>
<div class="a xc" style="left:545.6px;top:508px"><span class="k">打</span><span class="k">印</span><span class="k">图</span></div>
<div class="a xc" style="left:687.4px;top:508px"><span class="k">蘑</span><span class="k">菇</span><span class="k">头</span></div>

<!-- ANNOTATIONS -->
<div class="a rbox" style="left:280px;top:5px;width:104px;height:43px"></div>
<div class="a circ cs" style="left:250px;top:12px;width:31px;height:32px">1</div>
<div class="a rbox" style="left:287px;top:245px;width:107px;height:36px;border-radius:5px"></div>
<div class="a circ cs" style="left:255px;top:247px">2</div>
<div class="a rbox" style="left:46px;top:216px;width:136px;height:42px"></div>
<div class="a circ" style="left:82px;top:257px;font-size:19px;line-height:31px">3</div>
<div class="a" style="left:117px;top:265px;font-size:17px;line-height:18px;letter-spacing:0.4px;color:#f5333a;white-space:nowrap"><span class="k">选</span><span class="k">择</span><span class="k">对</span><span class="k">应</span><span class="k">图</span><span class="k">库</span></div>
<div class="a rbox" style="left:658px;top:204px;width:90px;height:36px"></div>
<div class="a circ" style="left:629px;top:206px;font-size:19px;line-height:31px">4</div>
<div class="a rbox" style="left:430px;top:311px;width:127px;height:31px"></div>
<div class="a circ cs" style="left:556px;top:311px">5</div>
<div class="a rbox" style="left:1624px;top:485px;width:73px;height:25px;border-width:3.5px;border-radius:5px"></div>
<div class="a circ cs" style="left:1591px;top:480px;width:32px;height:32px">6</div>
<div class="a" style="left:1544px;top:518px;font-size:17px;line-height:18px;color:#f5333a;white-space:nowrap"><span class="k">导</span><span class="k">入</span><span class="k">模</span><span class="k">板</span><span class="k">表</span><span class="k">头</span><span class="k">新</span><span class="k">增</span>&rdquo;<span class="k">备</span><span class="k">注</span>&ldquo;<span class="k">信</span><span class="k">息</span></div>

</body></html>
